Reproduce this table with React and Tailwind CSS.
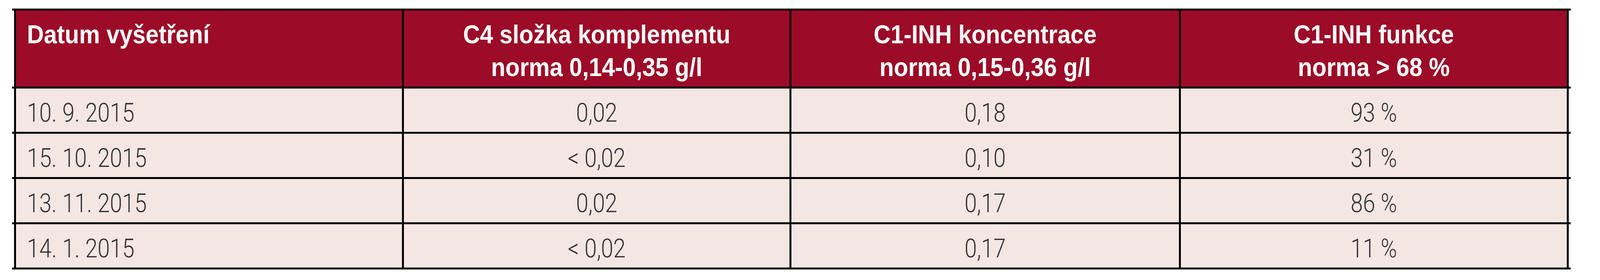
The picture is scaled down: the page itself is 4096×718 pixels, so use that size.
const rows = [
  ["10. 9. 2015", "0,02", "0,18", "93 %"],
  ["15. 10. 2015", "< 0,02", "0,10", "31 %"],
  ["13. 11. 2015", "0,02", "0,17", "86 %"],
  ["14. 1. 2015", "< 0,02", "0,17", "11 %"],
];

const headers = [
  ["C4 složka komplementu", "norma 0,14-0,35 g/l"],
  ["C1-INH koncentrace", "norma 0,15-0,36 g/l"],
  ["C1-INH funkce", "norma > 68 %"],
];

function Line() {
  return <div className="h-[5px] w-full bg-black" />;
}

export default function App() {
  return (
    <div className="min-h-[718px] w-full bg-white pt-[22px] pl-[31px]">
      <div className="w-[3990px]">
        <Line />
        <div className="mx-[5px] grid h-[195px] grid-cols-[993px_992px_997px_998px] bg-[#9c0b27] font-['Liberation_Sans',Arial,sans-serif] text-[66px] font-bold leading-[84px] text-white">
          <div className="border-l-[5px] border-black pl-[28px] pt-[19px]">
            <div className="origin-left scale-x-[0.91] whitespace-nowrap">Datum vyšetření</div>
          </div>
          {headers.map((h, i) => (
            <div
              key={i}
              className={
                i === 2
                  ? "border-x-[5px] border-black pt-[19px]"
                  : "border-l-[5px] border-black pt-[19px]"
              }
            >
              <div className="origin-center scale-x-[0.91] whitespace-nowrap text-center">
                <div>{h[0]}</div>
                <div>{h[1]}</div>
              </div>
            </div>
          ))}
        </div>
        <Line />
        {rows.map((r, ri) => (
          <div key={ri}>
            <div className="mx-[5px] grid h-[111px] grid-cols-[993px_992px_997px_998px] bg-[#f4e6e3] font-['Roboto','Liberation_Sans',sans-serif] text-[66px] font-light leading-[66px] text-[#333333]">
              <div className="border-l-[5px] border-black pl-[28px] pt-[30px]">
                <div className="origin-left scale-x-[0.86] whitespace-nowrap">{r[0]}</div>
              </div>
              <div className="border-l-[5px] border-black pt-[30px]">
                <div className="origin-center scale-x-[0.86] whitespace-nowrap text-center">{r[1]}</div>
              </div>
              <div className="border-l-[5px] border-black pt-[30px]">
                <div className="origin-center scale-x-[0.86] whitespace-nowrap text-center">{r[2]}</div>
              </div>
              <div className="border-x-[5px] border-black pt-[30px]">
                <div className="origin-center scale-x-[0.86] whitespace-nowrap text-center">{r[3]}</div>
              </div>
            </div>
            <Line />
          </div>
        ))}
      </div>
    </div>
  );
}
